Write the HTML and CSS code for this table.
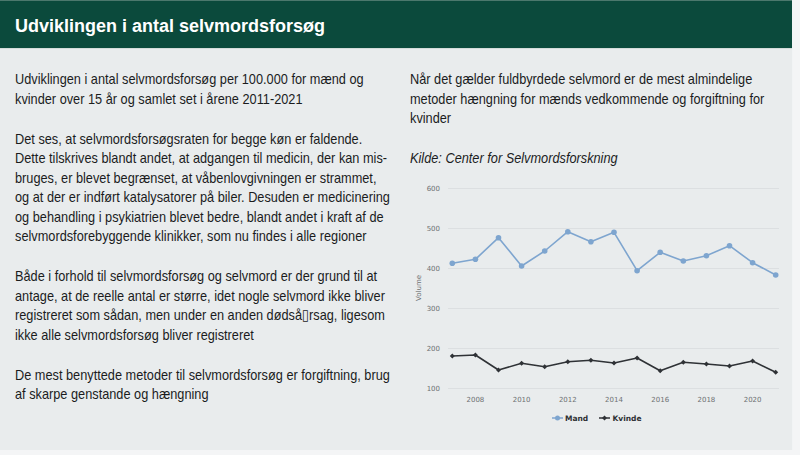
FILE: index.html
```html
<!DOCTYPE html>
<html lang="da">
<head>
<meta charset="utf-8">
<title>Udviklingen i antal selvmordsforsøg</title>
<link rel="stylesheet" href="styles.css">
</head>
<body>
<div class="panel">
  <header class="bar">
    <h1 class="title">Udviklingen i antal selvmordsforsøg</h1>
  </header>
  <div class="content">
    <div class="col col-left">
      <p>Udviklingen i antal selvmordsforsøg per 100.000 for mænd og kvinder over 15 år og samlet set i årene 2011-2021</p>
      <p>Det ses, at selvmordsforsøgsraten for begge køn er faldende. Dette tilskrives blandt andet, at adgangen til medicin, der kan mis-bruges, er blevet begrænset, at våbenlovgivningen er strammet, og&nbsp;at der er indført katalysatorer på biler. Desuden er medicinering og behandling i psykiatrien blevet bedre, blandt andet i kraft af de selvmordsforebyggende klinikker, som nu findes i alle regioner</p>
      <p>Både i forhold til selvmordsforsøg og selvmord er der grund til at antage, at de reelle antal er større, idet nogle selvmord ikke bliver registreret som sådan, men under en anden dødså▯rsag, ligesom ikke alle selvmordsforsøg bliver registreret</p>
      <p>De mest benyttede metoder til selvmordsforsøg er forgiftning, brug af skarpe genstande og hængning</p>
    </div>
    <div class="col col-right">
      <p>Når det gælder fuldbyrdede selvmord er de mest almindelige metoder hængning for mænds vedkommende og forgiftning for kvinder</p>
      <p class="source">Kilde: Center for Selvmordsforskning</p>
      <svg class="chart" width="380" height="255" viewBox="0 0 380 255" xmlns="http://www.w3.org/2000/svg">
        <g class="grid">
          <line x1="38" y1="13.5" x2="369" y2="13.5"/>
          <line x1="38" y1="53.5" x2="369" y2="53.5"/>
          <line x1="38" y1="93.5" x2="369" y2="93.5"/>
          <line x1="38" y1="133.5" x2="369" y2="133.5"/>
          <line x1="38" y1="173.5" x2="369" y2="173.5"/>
          <line x1="38" y1="213.5" x2="369" y2="213.5"/>
        </g>
        <g class="ylab">
          <text x="30" y="16.3">600</text>
          <text x="30" y="56.3">500</text>
          <text x="30" y="96.3">400</text>
          <text x="30" y="136.3">300</text>
          <text x="30" y="176.3">200</text>
          <text x="30" y="216.3">100</text>
        </g>
        <text class="ytitle" transform="translate(11 113) rotate(-90)">Volume</text>
        <g class="xlab">
          <text x="65.4" y="227">2008</text>
          <text x="111.6" y="227">2010</text>
          <text x="157.8" y="227">2012</text>
          <text x="204" y="227">2014</text>
          <text x="250.2" y="227">2016</text>
          <text x="296.4" y="227">2018</text>
          <text x="342.6" y="227">2020</text>
        </g>
        <g class="s-mand">
          <polyline points="42.3,88.3 65.4,84.3 88.5,62.7 111.6,91 134.7,76 157.8,56.7 180.9,66.7 204,57.3 227.1,95.7 250.2,77.3 273.3,86 296.4,80.7 319.5,70.7 342.6,87.7 365.7,100"/>
          <circle cx="42.3" cy="88.3" r="2.8"/><circle cx="65.4" cy="84.3" r="2.8"/><circle cx="88.5" cy="62.7" r="2.8"/><circle cx="111.6" cy="91" r="2.8"/><circle cx="134.7" cy="76" r="2.8"/><circle cx="157.8" cy="56.7" r="2.8"/><circle cx="180.9" cy="66.7" r="2.8"/><circle cx="204" cy="57.3" r="2.8"/><circle cx="227.1" cy="95.7" r="2.8"/><circle cx="250.2" cy="77.3" r="2.8"/><circle cx="273.3" cy="86" r="2.8"/><circle cx="296.4" cy="80.7" r="2.8"/><circle cx="319.5" cy="70.7" r="2.8"/><circle cx="342.6" cy="87.7" r="2.8"/><circle cx="365.7" cy="100" r="2.8"/>
        </g>
        <g class="s-kvinde">
          <polyline points="42.3,181 65.4,180 88.5,195 111.6,188.3 134.7,191.7 157.8,186.7 180.9,185.3 204,188 227.1,183 250.2,195.7 273.3,187.3 296.4,189 319.5,191 342.6,186 365.7,197.3"/>
          <path d="M42.3 178.5l2.5 2.5-2.5 2.5-2.5-2.5zM65.4 177.5l2.5 2.5-2.5 2.5-2.5-2.5zM88.5 192.5l2.5 2.5-2.5 2.5-2.5-2.5zM111.6 185.8l2.5 2.5-2.5 2.5-2.5-2.5zM134.7 189.2l2.5 2.5-2.5 2.5-2.5-2.5zM157.8 184.2l2.5 2.5-2.5 2.5-2.5-2.5zM180.9 182.8l2.5 2.5-2.5 2.5-2.5-2.5zM204 185.5l2.5 2.5-2.5 2.5-2.5-2.5zM227.1 180.5l2.5 2.5-2.5 2.5-2.5-2.5zM250.2 193.2l2.5 2.5-2.5 2.5-2.5-2.5zM273.3 184.8l2.5 2.5-2.5 2.5-2.5-2.5zM296.4 186.5l2.5 2.5-2.5 2.5-2.5-2.5zM319.5 188.5l2.5 2.5-2.5 2.5-2.5-2.5zM342.6 183.5l2.5 2.5-2.5 2.5-2.5-2.5zM365.7 194.8l2.5 2.5-2.5 2.5-2.5-2.5z"/>
        </g>
        <g class="legend">
          <line class="lg-mand" x1="142" y1="243" x2="153" y2="243"/>
          <circle class="lg-mand-dot" cx="147.5" cy="243" r="2.5"/>
          <text x="155" y="246">Mand</text>
          <line class="lg-kvinde" x1="189" y1="243" x2="200" y2="243"/>
          <path class="lg-kvinde-dot" d="M194.5 240.5l2.5 2.5-2.5 2.5-2.5-2.5z"/>
          <text x="202.5" y="246">Kvinde</text>
        </g>
      </svg>
    </div>
  </div>
</div>
</body>
</html>
```

FILE: styles.css
```css
html, body {
  margin: 0;
  padding: 0;
}

body {
  background: #f4f5f6;
  width: 800px;
  height: 455px;
  overflow: hidden;
}

.panel {
  width: 793px;
  height: 450px;
  background: #e9eced;
  border-right: 1px solid #f2f4f5;
  box-sizing: border-box;
  overflow: hidden;
}

.bar {
  background: #0b4a3c;
  border-top: 1px solid #4c786d;
  border-bottom: 1px solid #d4dcda;
  height: 49px;
  box-sizing: border-box;
  padding: 3px 0 0 15px;
}

.title {
  margin: 0;
  color: #ffffff;
  font-family: "Liberation Sans", Arial, sans-serif;
  font-weight: bold;
  font-size: 18px;
  line-height: 44px;
}

.content {
  display: grid;
  grid-template-columns: 380px 380px;
  column-gap: 15px;
  padding: 20px 0 0 15px;
}

/* The source text is a horizontally condensed sans; narrow the regular face. */
.col p {
  width: 448px;
  margin: 0 -68px 20.5px 0;
  transform: scaleX(0.85);
  transform-origin: 0 0;
  font-family: "Liberation Sans", Arial, "DejaVu Sans", sans-serif;
  font-size: 15px;
  line-height: 19.5px;
  color: #1b1c1d;
}

.col-right .source {
  font-style: italic;
  margin-bottom: 0;
}

.chart {
  display: block;
  margin: 7px 0 0 0;
  font-family: "DejaVu Sans", sans-serif;
}

.grid line {
  stroke: #dcdfe1;
  stroke-width: 1;
}

.ylab text {
  font-size: 7px;
  fill: #6e7173;
  text-anchor: end;
}

.ytitle {
  font-size: 7px;
  fill: #6e7173;
  text-anchor: middle;
}

.xlab text {
  font-size: 7px;
  fill: #6e7173;
  text-anchor: middle;
}

.s-mand polyline {
  fill: none;
  stroke: #7ea5cf;
  stroke-width: 1.6;
  stroke-linejoin: round;
}

.s-mand circle {
  fill: #7ea5cf;
}

.s-kvinde polyline {
  fill: none;
  stroke: #2f3236;
  stroke-width: 1.6;
  stroke-linejoin: round;
}

.s-kvinde path {
  fill: #2f3236;
}

.legend text {
  font-size: 7.5px;
  font-weight: bold;
  fill: #2e3033;
}

.lg-mand {
  stroke: #7ea5cf;
  stroke-width: 1.5;
}

.lg-mand-dot {
  fill: #7ea5cf;
}

.lg-kvinde {
  stroke: #2f3236;
  stroke-width: 1.5;
}

.lg-kvinde-dot {
  fill: #2f3236;
}
```
